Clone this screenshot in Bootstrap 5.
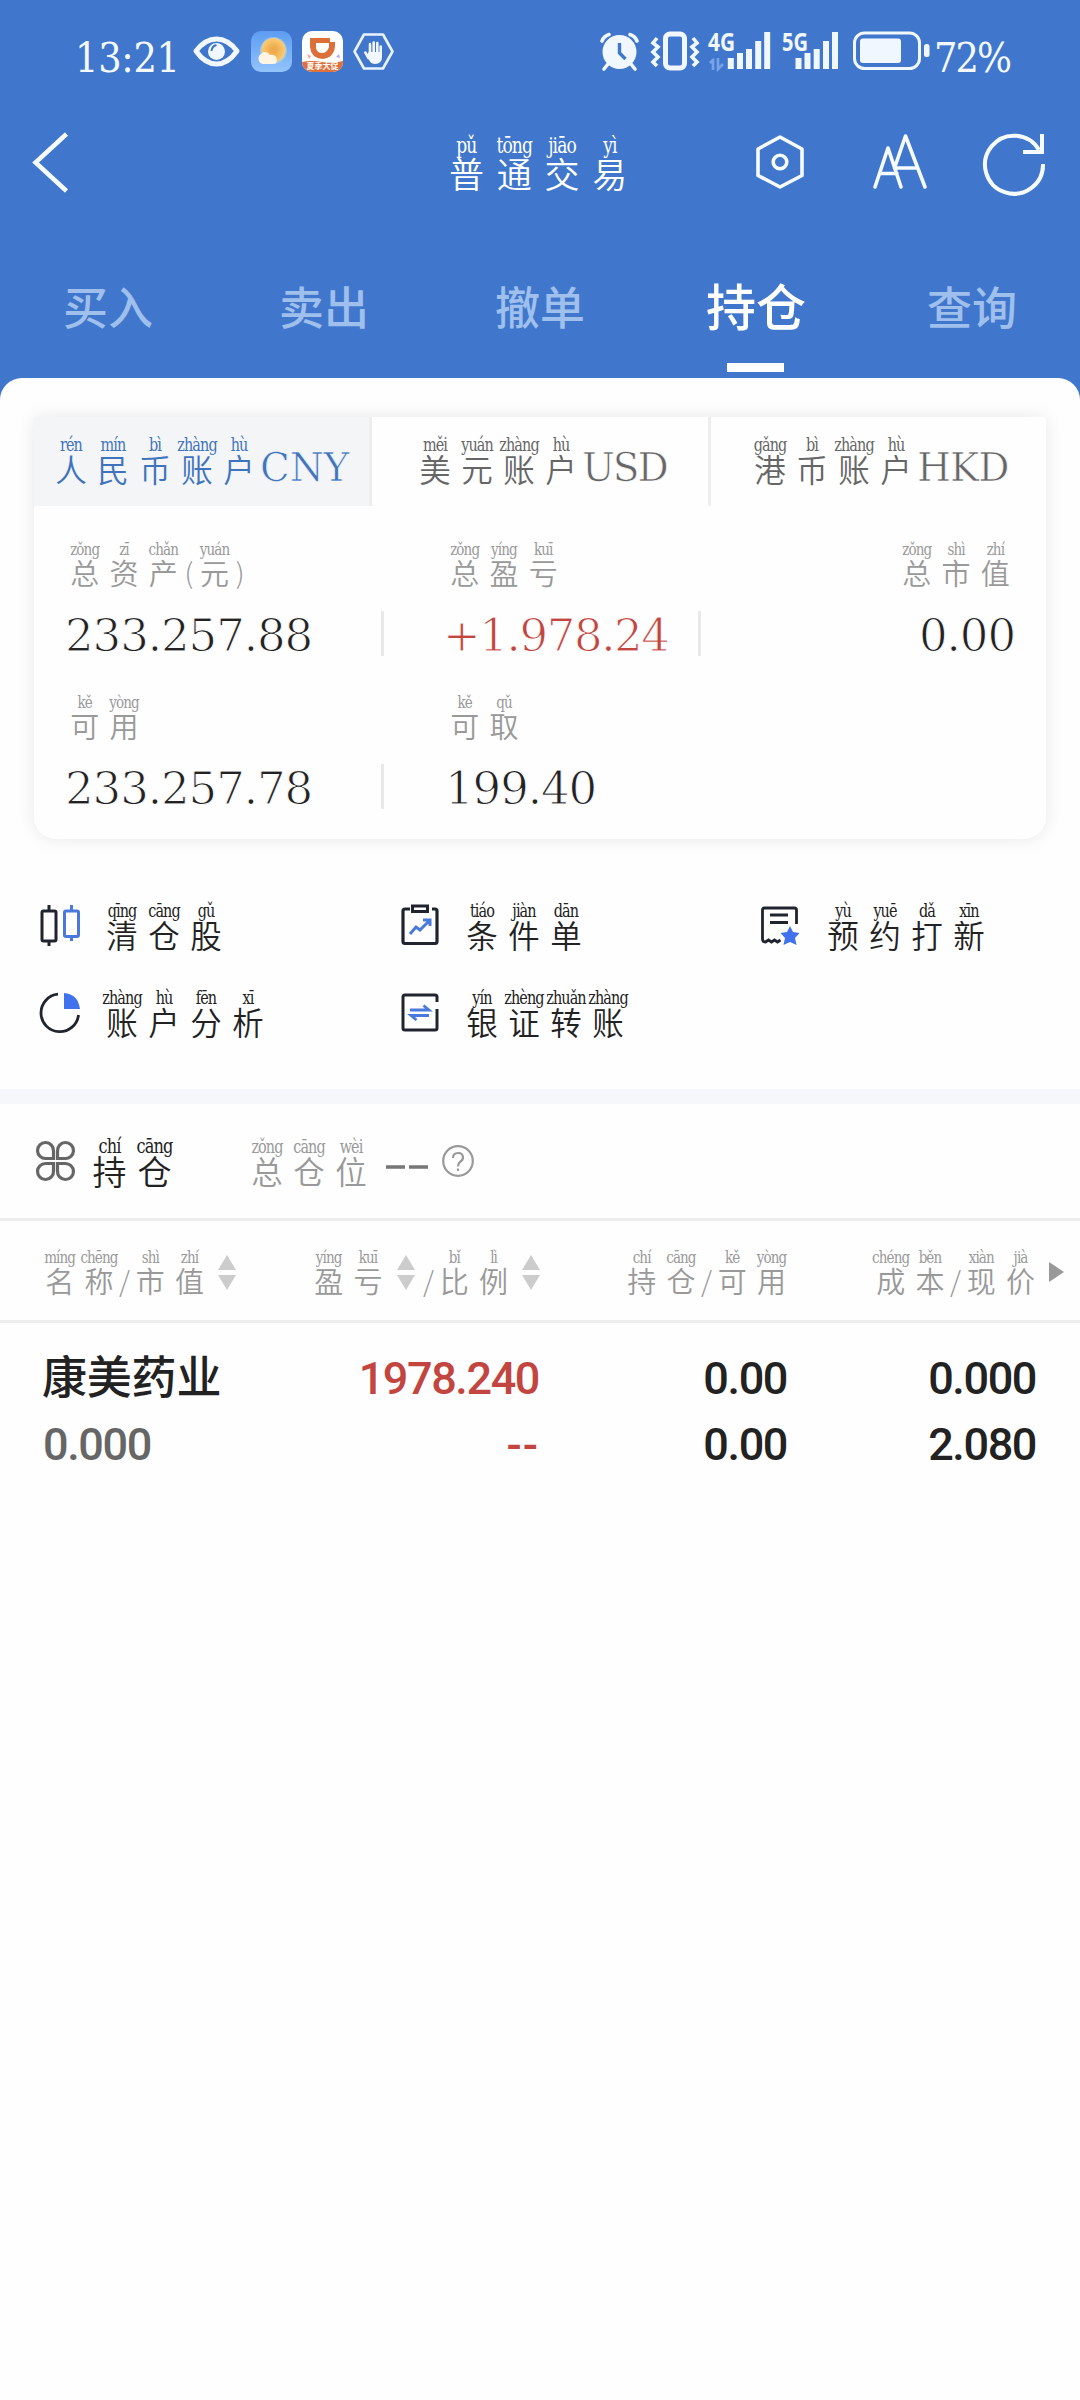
<!DOCTYPE html>
<html lang="zh-CN">
<head>
<meta charset="utf-8">
<meta name="viewport" content="width=device-width, initial-scale=1">
<title>普通交易</title>
<link href="https://cdn.jsdelivr.net/npm/bootstrap@5.3.0/dist/css/bootstrap.min.css" rel="stylesheet">
<style>
:root{--blue:#4077cc;--ink:#222;--mute:#999;--up:#c2453f}
body{margin:0;background:#fff;color:var(--ink);font-family:"Noto Sans CJK SC",sans-serif;line-height:1;min-height:2400px}
svg{display:block;flex:none;overflow:visible}
.app{background:var(--blue);width:1080px}
.slab{font-family:"DejaVu Serif",serif;white-space:nowrap;-webkit-text-stroke:1px var(--under,#fefefe);line-height:1}
/* syllable over character */
.hz{display:inline-flex;flex-direction:column;align-items:center;width:var(--p,42px);white-space:nowrap;font-weight:350;font-size:var(--c,30px);line-height:1;flex:none}
.hz b{font:400 var(--y,18px)/17px "DejaVu Serif Condensed","DejaVu Serif",serif;font-stretch:condensed;letter-spacing:-.9px;transform:scaleY(1.14)}
.mid{--p:42px;--c:31.5px;--y:16px}
.sml{--p:39.3px;--c:29px;--y:15px}
.sep{font-size:28px;font-weight:300;width:12px;text-align:center;flex:none}
.status{height:100px;padding:31px 67px 0 75px}
.app header{--under:var(--blue)}
.status .slab{font-family:"DejaVu Serif Condensed","DejaVu Serif",serif;font-stretch:condensed;font-size:41px;letter-spacing:-.3px;color:#f4f9ff;padding-top:7px;-webkit-text-stroke-width:0}
.clock{width:118px}
.topbar{height:125px;color:#fff;--p:47.8px;--c:35px;--y:19px;padding:32px 35px 0 33px}
.topbar .hz b{line-height:20px}
.tabs5 a{flex:1 0 0;text-align:center;font-size:45px;font-weight:500;color:#9fbfec;text-decoration:none;padding-top:58px}
.tabs5{height:153px}
.tabs5 a.on{color:#fff;font-size:50px;padding-top:54px}
.tabs5 a.on::after{content:"";display:block;width:57px;height:9px;background:#fff;margin:34px auto 0;transform:translateX(-1px)}
.sheet{background:#fefefe;border-radius:22px 22px 0 0;padding-top:39px;min-height:2022px}
.acct{margin:0 34px;height:422px;border-radius:4px 4px 22px 22px;background:#fefefe;box-shadow:0 0 18px rgba(0,0,0,.09)}
.acct-tab{height:89px;padding-top:19px;color:#666;border-right:3px solid #eee}
.acct-tab .slab{font-size:39px;padding-top:12px;letter-spacing:-2px;-webkit-text-stroke-width:.7px}
.acct-tab.on{background:#f4f5f7;color:#3f74bd;--under:#f4f5f7}
.acct-tab.on .slab{letter-spacing:-.2px}
.lbl{color:var(--mute);height:72px}
.num{font-size:45px;letter-spacing:-1.05px;line-height:45px;height:45px}
.fig{height:153px}
.vline{width:3px;height:45px;background:#e9e9e9;flex:none}
.fn{width:361px;height:87px;flex:none}
.fn svg{margin-top:3px}
.band{height:15px;background:#f6f7fa}
.holdhead{height:114px;padding:33px 0 0 36px}
.cols{height:105px;border-top:3px solid #ededed;border-bottom:3px solid #ededed;color:var(--mute);padding-top:28px}
.stock{font-family:Roboto,"Noto Sans CJK SC",sans-serif;font-weight:500;font-size:45px;letter-spacing:-1.4px;line-height:66px}
</style>
</head>
<body>
<div class="app">
<header>
<div class="status d-flex align-items-start">
 <span class="slab clock ps-0">13:21</span>
 <svg width="47" height="41" viewBox="0 0 47 41"><path d="M3 20Q12 8 23.500 8T44 20Q35 33 23.500 33T3 20Z" fill="none" stroke="#f1f7ff" stroke-width="5" stroke-linejoin="round"/><circle cx="23.500" cy="20.500" r="8.500" fill="#f1f7ff"/><path d="M18.500 20q.5-5 5-6" stroke="#4077cc" stroke-width="2" fill="none"/></svg>
 <svg style="margin-left:11px" width="41" height="41" viewBox="0 0 41 41"><defs><linearGradient id="sky" x2="0" y2="1"><stop stop-color="#5c9cf3"/><stop offset="1" stop-color="#93c4fb"/></linearGradient><radialGradient id="sun"><stop offset=".2" stop-color="#f0a94c"/><stop offset="1" stop-color="#f9cd74"/></radialGradient></defs><rect width="41" height="41" rx="10" fill="url(#sky)"/><circle cx="22.500" cy="19.500" r="13.500" fill="#bcd2dc" opacity=".6"/><circle cx="22.500" cy="19" r="12" fill="url(#sun)"/><path d="M12 33a5.500 5.500 0 0 1-2-10 5.500 5.500 0 0 1 9 1q6-1 7 5 0 4-4 4Z" fill="#fff5e2"/></svg>
 <svg style="margin-left:10px" width="41" height="41" viewBox="0 0 41 41"><defs><clipPath id="rr"><rect width="41" height="41" rx="10"/></clipPath></defs><g clip-path="url(#rr)"><rect width="41" height="41" fill="#fff"/><path d="M0 31q10-2 20 0t21-1v11H0Z" fill="#e0703c"/><path d="M5 23l4 2-2 3Z" fill="#f3a88c"/><path d="M34 26l3-3 1 4Z" fill="#b9a5ea"/><path d="M8 7h20v4h5v4q-1 12-12.500 13Q9 27 8 16Zm6 5v5q1 5 6 5t7-6v-4Z" fill="#dd7038" fill-rule="evenodd"/></g><text x="20.500" y="37.500" font-size="8" font-weight="700" text-anchor="middle" fill="#fff" font-family="Noto Sans CJK SC">夏季大促</text></svg>
 <svg style="margin-left:10px" width="41" height="41" viewBox="0 0 41 41"><path d="M11 3.500H30L39.500 20.500 30 37.500H11L1.500 20.500Z" fill="none" stroke="#e9f2ff" stroke-width="2.600" stroke-linejoin="round"/><g stroke="#f1f7ff" stroke-width="2.600" stroke-linecap="round"><path d="M17 24V13M20.700 24V11.500M24.300 24V12M27.700 25V15.500M15.500 27L12.300 21.500"/></g><path d="M15.700 21H29V26Q29 33 22 33 18 33 16 29L13.500 25Z" fill="#f1f7ff"/></svg>
 <svg class="ms-auto" width="39" height="41" viewBox="0 0 39 41"><circle cx="19.500" cy="21" r="17" fill="#f1f7ff"/><path d="M8 33l-4 5M31 33l4 5M2 10Q4 5 9 3.500M37 10Q35 5 30 3.500" stroke="#f1f7ff" stroke-width="3.600" stroke-linecap="round" fill="none"/><path d="M19.500 12v10l6 6" stroke="#4077cc" stroke-width="3.400" fill="none"/></svg>
 <svg style="margin-left:12px" width="48" height="41" viewBox="0 0 48 41"><rect x="14.500" y="3" width="19" height="34" rx="4.500" fill="none" stroke="#f1f7ff" stroke-width="5"/><path d="M6 7l-4 5 5 4-5 5 5 5-5 5 4 4M42 7l4 5-5 4 5 5-5 5 5 5-4 4" fill="none" stroke="#f1f7ff" stroke-width="3.600"/></svg>
 <svg style="margin-left:9px" width="63" height="41" viewBox="0 0 63 41"><text x="0" y="20" font-size="25" textLength="27" lengthAdjust="spacingAndGlyphs" font-weight="700" fill="#f1f7ff" font-family="Noto Sans">4G</text><path d="M5 28v11M2 32l4-4M10 27v11l5-5" stroke="#77a3e8" stroke-width="2.600" fill="none"/><g stroke="#f1f7ff" stroke-width="6"><path d="M22.800 27v11M32 22v16M41 18v20M50.200 10v28M59.200 1v37"/></g></svg>
 <svg style="margin-left:10px" width="58" height="41" viewBox="0 0 58 41"><text x="1" y="20" font-size="25" textLength="26" lengthAdjust="spacingAndGlyphs" font-weight="700" fill="#f1f7ff" font-family="Noto Sans">5G</text><g stroke="#f1f7ff" stroke-width="6"><path d="M17.500 27v11M26.500 22v16M35.700 18v20M45 10v28M54 1v37"/></g></svg>
 <svg style="margin-left:14px" width="77" height="41" viewBox="0 0 77 41"><rect x="1.500" y="2" width="65" height="35.500" rx="10" fill="none" stroke="#f1f7ff" stroke-width="3"/><rect x="7" y="7.500" width="41" height="24.500" rx="3" fill="#f1f7ff"/><rect x="71" y="13" width="5.500" height="13" rx="2.500" fill="#f1f7ff"/></svg>
 <span class="slab" style="width:83px;padding-left:4px;letter-spacing:-2px">72%</span>
</div>
<nav class="topbar d-flex align-items-start">
 <svg width="36" height="62" viewBox="0 0 36 62"><path d="M33.500 2L2.500 30.500 33.500 59" fill="none" stroke="#f6fbff" stroke-width="4.500"/></svg>
 <div class="d-flex" style="margin-left:373.500px;width:191.500px;margin-top:3px"><span class="hz"><b>pǔ</b>普</span><span class="hz"><b>tōng</b>通</span><span class="hz"><b>jiāo</b>交</span><span class="hz"><b>yì</b>易</span></div>
 <svg style="margin-left:122px" width="48" height="62" viewBox="0 0 48 62"><path d="M24 5L46 17V43.500L24 55 2 43.500V17Z" fill="none" stroke="#f6fbff" stroke-width="3.600" stroke-linejoin="round"/><circle cx="24" cy="30" r="6.800" fill="none" stroke="#f6fbff" stroke-width="3.600"/></svg>
 <svg style="margin-left:69px" width="54" height="62" viewBox="0 0 54 62"><path d="M2 55L15 16 28 55M7 41.500H24M21.500 36L32.500 4 52 55M24 36H44" fill="none" stroke="#f6fbff" stroke-width="3.600" stroke-linecap="round" stroke-linejoin="round"/></svg>
 <svg style="margin-left:56px" width="62" height="62" viewBox="0 0 62 62"><path d="M60 32A29 29 0 1 1 56 18" fill="none" stroke="#f6fbff" stroke-width="4"/><path d="M40 20H59V2" fill="none" stroke="#f6fbff" stroke-width="4"/></svg>
</nav>
<nav class="tabs5 d-flex"><a href="#">买入</a><a href="#">卖出</a><a href="#">撤单</a><a href="#" class="on">持仓</a><a href="#">查询</a></nav>
</header>
<main class="sheet">
<section class="acct">
 <div class="d-flex mid">
  <div class="acct-tab on d-flex" style="width:338px;padding-left:16px"><span class="hz"><b>rén</b>人</span><span class="hz"><b>mín</b>民</span><span class="hz"><b>bì</b>币</span><span class="hz"><b>zhàng</b>账</span><span class="hz"><b>hù</b>户</span><span class="slab">CNY</span></div>
  <div class="acct-tab d-flex" style="width:339px;padding-left:42px"><span class="hz"><b>měi</b>美</span><span class="hz"><b>yuán</b>元</span><span class="hz"><b>zhàng</b>账</span><span class="hz"><b>hù</b>户</span><span class="slab">USD</span></div>
  <div class="acct-tab d-flex border-0 flex-fill" style="padding-left:38px"><span class="hz"><b>gǎng</b>港</span><span class="hz"><b>bì</b>币</span><span class="hz"><b>zhàng</b>账</span><span class="hz"><b>hù</b>户</span><span class="slab" style="letter-spacing:-1px">HKD</span></div>
 </div>
 <div class="fig d-flex sml" style="padding:35px 31px 0 31px">
  <div style="width:316px"><div class="lbl d-flex"><span class="hz"><b>zǒng</b>总</span><span class="hz"><b>zī</b>资</span><span class="hz"><b>chǎn</b>产</span><span class="sep" style="padding-top:17px">(</span><span class="hz"><b>yuán</b>元</span><span class="sep" style="padding-top:17px">)</span></div><div class="slab num">233.257.88</div></div>
  <div class="vline" style="margin-top:70px"></div>
  <div style="width:314px;padding-left:61px"><div class="lbl d-flex"><span class="hz"><b>zǒng</b>总</span><span class="hz"><b>yíng</b>盈</span><span class="hz"><b>kuī</b>亏</span></div><div class="slab num" style="color:var(--up);letter-spacing:-1.4px;margin-left:-2px">+1.978.24</div></div>
  <div class="vline" style="margin-top:70px"></div>
  <div class="flex-fill d-flex flex-column align-items-end"><div class="lbl d-flex"><span class="hz"><b>zǒng</b>总</span><span class="hz"><b>shì</b>市</span><span class="hz"><b>zhí</b>值</span></div><div class="slab num">0.00</div></div>
 </div>
 <div class="fig d-flex sml" style="padding:35px 31px 0 31px">
  <div style="width:316px"><div class="lbl d-flex"><span class="hz"><b>kě</b>可</span><span class="hz"><b>yòng</b>用</span></div><div class="slab num">233.257.78</div></div>
  <div class="vline" style="margin-top:70px"></div>
  <div style="padding-left:61px"><div class="lbl d-flex"><span class="hz"><b>kě</b>可</span><span class="hz"><b>qǔ</b>取</span></div><div class="slab num">199.40</div></div>
 </div>
</section>
<section class="d-flex flex-wrap align-content-start mid" style="padding:63px 0 0 39px;height:250px">
 <div class="fn d-flex"><svg width="40" height="41" viewBox="0 0 40 41"><path d="M10 0v6M10 36v5M4.500 6h11q1.500 0 1.500 1.500v27q0 1.500-1.500 1.500h-11Q3 36 3 34.500V7.500Q3 6 4.500 6Z" fill="none" stroke="#20242f" stroke-width="3"/><path d="M32.500 0v6M32.500 31v5M27 6h11q1.500 0 1.500 1.500V30q0 1.500-1.500 1.500H27q-1.500 0-1.500-1.500V7.500Q25.500 6 27 6Z" fill="none" stroke="#4a79dd" stroke-width="3"/></svg><div class="d-flex" style="margin-left:22px"><span class="hz"><b>qīng</b>清</span><span class="hz"><b>cāng</b>仓</span><span class="hz"><b>gǔ</b>股</span></div></div>
 <div class="fn d-flex"><svg width="39" height="41" viewBox="-1 0 39 41"><path d="M9 4H4Q2 4 2 6V36.500q0 2 2 2H34q2 0 2-2V6q0-2-2-2H31" fill="none" stroke="#20242f" stroke-width="3.200"/><rect x="11.500" y="1" width="15" height="5.500" fill="none" stroke="#20242f" stroke-width="3"/><path d="M9 29L15 22 19 25 28 16M22 15H29V21" fill="none" stroke="#4a79dd" stroke-width="3"/></svg><div class="d-flex" style="margin-left:22px"><span class="hz"><b>tiáo</b>条</span><span class="hz"><b>jiàn</b>件</span><span class="hz"><b>dān</b>单</span></div></div>
 <div class="fn d-flex" style="width:318px"><svg width="39" height="41" viewBox="0 0 39 41"><path d="M35.500 19V5q0-2-2-2H3.500q-2 0-2 2V34q0 3 3 3l3-2 3 2 3-2 3 2 3-2" fill="none" stroke="#20242f" stroke-width="2.800"/><path d="M9 10H27M9 17.500H27" stroke="#20242f" stroke-width="2.800"/><path d="M29 21l3 6 6.500 1-4.500 5 1.500 7-6.500-3-6.500 3L24 33l-4.500-5 6.500-1Z" fill="#3f72ec"/></svg><div class="d-flex" style="margin-left:22px"><span class="hz"><b>yù</b>预</span><span class="hz"><b>yuē</b>约</span><span class="hz"><b>dǎ</b>打</span><span class="hz"><b>xīn</b>新</span></div></div>
 <div class="fn d-flex"><svg width="40" height="41" viewBox="-1 0 40 41"><path d="M18 2.200A18.800 18.800 0 1 0 38.500 23" fill="none" stroke="#20242f" stroke-width="2.800"/><path d="M24 1Q38 2 40 17H24Z" fill="#3f72ec"/></svg><div class="d-flex" style="margin-left:22px"><span class="hz"><b>zhàng</b>账</span><span class="hz"><b>hù</b>户</span><span class="hz"><b>fēn</b>分</span><span class="hz"><b>xī</b>析</span></div></div>
 <div class="fn d-flex"><svg width="39" height="41" viewBox="-1 0 39 41"><path d="M36 10V5q0-2-2-2H4Q2 3 2 5V36q0 2 2 2H34q2 0 2-2V17" fill="none" stroke="#20242f" stroke-width="3"/><path d="M9 18H28L22.500 13.500M28 23.500H10L15.500 28" fill="none" stroke="#4a79dd" stroke-width="2.800"/></svg><div class="d-flex" style="margin-left:22px"><span class="hz"><b>yín</b>银</span><span class="hz"><b>zhèng</b>证</span><span class="hz"><b>zhuǎn</b>转</span><span class="hz"><b>zhàng</b>账</span></div></div>
</section>
<div class="band"></div>
<section class="holdhead d-flex">
 <svg style="margin-top:4px" width="39" height="40" viewBox="0 0 39 40"><path d="M17.500 17.500H10A8 8 0 1 1 17.500 10ZM21.500 17.500H29A8 8 0 1 0 21.500 10ZM17.500 22.500H10A8 8 0 1 0 17.500 30ZM21.500 22.500H29A8 8 0 1 1 21.500 30Z" fill="none" stroke="#666" stroke-width="3.200"/></svg>
 <div class="d-flex" style="--p:45px;--c:34px;--y:18px;margin-left:12px"><span class="hz"><b>chí</b>持</span><span class="hz"><b>cāng</b>仓</span></div>
 <div class="d-flex mid" style="margin-left:69px;color:var(--mute);padding-top:1px"><span class="hz"><b>zǒng</b>总</span><span class="hz"><b>cāng</b>仓</span><span class="hz"><b>wèi</b>位</span></div>
 <svg style="margin:28px 0 0 14px" width="42" height="4"><path d="M0 2H19M23 2H42" stroke="#777" stroke-width="3.500"/></svg>
 <svg style="margin:7px 0 0 14px" width="32" height="34" viewBox="0 0 32 34"><circle cx="16" cy="17" r="14.800" fill="none" stroke="#999" stroke-width="2.200"/><path d="M11 14Q11 9 16 9T21 13.500Q21 16 18 18 16 19.500 16 22.500M16 24.500V27" fill="none" stroke="#999" stroke-width="2.200"/></svg>
</section>
<section class="cols sml d-flex">
 <div class="d-flex" style="width:315px;padding-left:40px"><span class="hz"><b>míng</b>名</span><span class="hz"><b>chēng</b>称</span><span class="sep" style="padding-top:17px">/</span><span class="hz"><b>shì</b>市</span><span class="hz"><b>zhí</b>值</span><svg style="margin:6px 0 0 9px" width="18" height="35"><path d="M0 15L9 0 18 15ZM0 20H18L9 35Z" fill="#ccc"/></svg></div>
 <div class="d-flex" style="width:307px"><span class="hz" style="margin-left:-6px"><b>yíng</b>盈</span><span class="hz"><b>kuī</b>亏</span><svg style="margin:6px 8px 0 9px" width="18" height="35"><path d="M0 15L9 0 18 15ZM0 20H18L9 35Z" fill="#ccc"/></svg><span class="sep" style="padding-top:17px">/</span><span class="hz"><b>bǐ</b>比</span><span class="hz"><b>lì</b>例</span><svg style="margin:6px 0 0 9px" width="18" height="35"><path d="M0 15L9 0 18 15ZM0 20H18L9 35Z" fill="#ccc"/></svg></div>
 <div class="d-flex" style="width:249px"><span class="hz"><b>chí</b>持</span><span class="hz"><b>cāng</b>仓</span><span class="sep" style="padding-top:17px">/</span><span class="hz"><b>kě</b>可</span><span class="hz"><b>yòng</b>用</span></div>
 <div class="d-flex"><span class="hz"><b>chéng</b>成</span><span class="hz"><b>běn</b>本</span><span class="sep" style="padding-top:17px">/</span><span class="hz"><b>xiàn</b>现</span><span class="hz"><b>jià</b>价</span><svg style="margin:13px 0 0 9px" width="15" height="20"><path d="M0 0L15 10 0 20Z" fill="#999"/></svg></div>
</section>
<section class="stock" style="padding-top:23px">
 <div class="d-flex w-100"><div class="text-start" style="width:240px;padding-left:42px;letter-spacing:-.2px">康美药业</div><div class="text-end" style="width:299px;color:var(--up)">1978.240</div><div class="text-end" style="width:248px">0.00</div><div class="text-end" style="width:249px">0.000</div></div>
 <div class="d-flex w-100"><div class="text-start" style="width:240px;padding-left:43px;color:#666">0.000</div><div class="text-end" style="width:299px;color:var(--up);letter-spacing:1px">--</div><div class="text-end" style="width:248px">0.00</div><div class="text-end" style="width:249px">2.080</div></div>
</section>
</main>
</div>
<script src="https://cdn.jsdelivr.net/npm/bootstrap@5.3.0/dist/js/bootstrap.bundle.min.js"></script>
</body>
</html>
